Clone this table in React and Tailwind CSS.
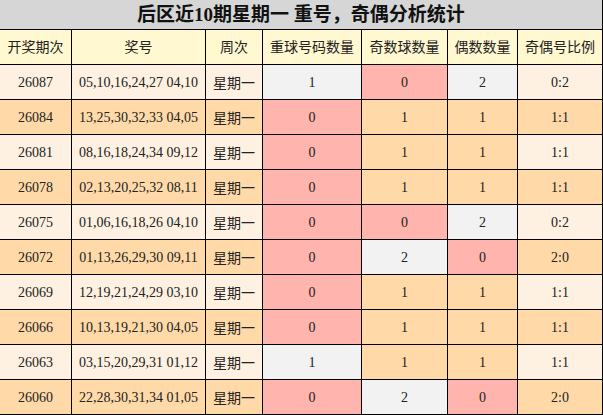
import React from "react";

const rows = [
  ["26087", "05,10,16,24,27 04,10", 1, 0, 2, "0:2"],
  ["26084", "13,25,30,32,33 04,05", 0, 1, 1, "1:1"],
  ["26081", "08,16,18,24,34 09,12", 0, 1, 1, "1:1"],
  ["26078", "02,13,20,25,32 08,11", 0, 1, 1, "1:1"],
  ["26075", "01,06,16,18,26 04,10", 0, 0, 2, "0:2"],
  ["26072", "01,13,26,29,30 09,11", 0, 2, 0, "2:0"],
  ["26069", "12,19,21,24,29 03,10", 0, 1, 1, "1:1"],
  ["26066", "10,13,19,21,30 04,05", 0, 1, 1, "1:1"],
  ["26063", "03,15,20,29,31 01,12", 1, 1, 1, "1:1"],
  ["26060", "22,28,30,31,34 01,05", 0, 2, 0, "2:0"],
];

const headers = ["开奖期次", "奖号", "周次", "重球号码数量", "奇数球数量", "偶数数量", "奇偶号比例"];

function valBg(v, rowBg) {
  if (v === 0) return "bg-[#ffb4ad]";
  if (v === 1) return "bg-[#ffdaa8]";
  return "bg-[#f2f2f2]";
}

function repBg(v) {
  return v === 0 ? "bg-[#ffb4ad]" : "bg-[#f2f2f2]";
}

const cell = "border-r border-b border-black flex items-center justify-center";

export default function App() {
  return (
    <div
      className="w-[603px] h-[415px] overflow-hidden text-[#222]"
      style={{ fontFamily: '"Liberation Serif","Noto Sans CJK SC",serif' }}
    >
      <div className="grid grid-cols-[72px_134px_57px_99px_86px_70px_85px] grid-rows-[30px_35px_repeat(10,35px)]">
        <div className={`${cell} col-span-7 bg-[#d6d6d6] text-[19px] font-bold text-[#111] leading-none`}>
          后区近10期星期一 重号，奇偶分析统计
        </div>
        {headers.map((h) => (
          <div key={h} className={`${cell} bg-[#fff8d1] text-[14px]`}>
            {h}
          </div>
        ))}
        {rows.map((r, i) => {
          const rowBg = i % 2 === 0 ? "bg-[#fff1e1]" : "bg-[#ffdaa8]";
          return (
            <React.Fragment key={r[0]}>
              <div className={`${cell} ${rowBg} text-[14px]`}>{r[0]}</div>
              <div className={`${cell} ${rowBg} text-[14px]`}>{r[1]}</div>
              <div className={`${cell} ${rowBg} text-[14px] pt-[3px]`}>星期一</div>
              <div className={`${cell} ${repBg(r[2])} text-[14px]`}>{r[2]}</div>
              <div className={`${cell} ${valBg(r[3])} text-[14px]`}>{r[3]}</div>
              <div className={`${cell} ${valBg(r[4])} text-[14px]`}>{r[4]}</div>
              <div className={`${cell} ${rowBg} text-[14px]`}>{r[5]}</div>
            </React.Fragment>
          );
        })}
      </div>
    </div>
  );
}
